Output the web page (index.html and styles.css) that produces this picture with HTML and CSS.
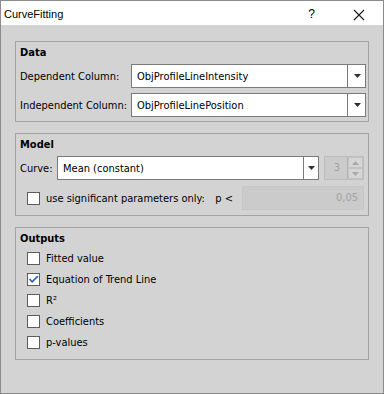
FILE: index.html
```html
<!DOCTYPE html>
<html lang="en">
<head>
    <meta charset="UTF-8">
    <title>CurveFitting</title>
    <link rel="stylesheet" href="styles.css">
</head>
<body>
    <div class="window">
        <div class="titlebar">
            <span class="title">CurveFitting</span>
            <span class="help">?</span>
            <svg class="close" width="12" height="12" viewBox="0 0 12 12">
                <path d="M1 1 L11 11 M11 1 L1 11" stroke="#1a1a1a" stroke-width="1.1" fill="none"/>
            </svg>
        </div>
        <div class="dialog">
            <div class="group data">
                <div class="group-title">Data</div>
                <div class="form-row">
                    <span class="label">Dependent Column:</span>
                    <div class="combo">
                        <span class="combo-text">ObjProfileLineIntensity</span>
                        <span class="combo-arrow"><svg width="7" height="4" viewBox="0 0 7 4"><path d="M0 0 H7 L3.5 4 Z" fill="#2e2e2e"/></svg></span>
                    </div>
                </div>
                <div class="form-row">
                    <span class="label">Independent Column:</span>
                    <div class="combo">
                        <span class="combo-text">ObjProfileLinePosition</span>
                        <span class="combo-arrow"><svg width="7" height="4" viewBox="0 0 7 4"><path d="M0 0 H7 L3.5 4 Z" fill="#2e2e2e"/></svg></span>
                    </div>
                </div>
            </div>

            <div class="group model">
                <div class="group-title">Model</div>
                <div class="curve-row">
                    <span class="label curve-label">Curve:</span>
                    <div class="combo curve-combo">
                        <span class="combo-text">Mean (constant)</span>
                        <span class="combo-arrow"><svg width="7" height="4" viewBox="0 0 7 4"><path d="M0 0 H7 L3.5 4 Z" fill="#2e2e2e"/></svg></span>
                    </div>
                    <div class="spinbox">
                        <span class="spin-value">3</span>
                        <div class="spin-buttons">
                            <span class="spin-btn"><svg width="7" height="4" viewBox="0 0 7 4"><path d="M0 4 H7 L3.5 0 Z" fill="#a9a9a9"/></svg></span>
                            <span class="spin-btn"><svg width="7" height="4" viewBox="0 0 7 4"><path d="M0 0 H7 L3.5 4 Z" fill="#a9a9a9"/></svg></span>
                        </div>
                    </div>
                </div>
                <div class="sig-row">
                    <span class="checkbox"></span>
                    <span class="check-text">use significant parameters only:</span>
                    <span class="p-label">p &lt;</span>
                    <div class="line-edit">0,05</div>
                </div>
            </div>

            <div class="group outputs">
                <div class="group-title">Outputs</div>
                <div class="check-row"><span class="checkbox"></span><span class="check-text">Fitted value</span></div>
                <div class="check-row">
                    <span class="checkbox">
                        <svg width="11" height="11" viewBox="0 0 11 11"><path d="M1.5 5 L4.2 7.8 L9.8 2.2" stroke="#2a62b8" stroke-width="1.7" fill="none"/></svg>
                    </span>
                    <span class="check-text">Equation of Trend Line</span>
                </div>
                <div class="check-row"><span class="checkbox"></span><span class="check-text">R²</span></div>
                <div class="check-row"><span class="checkbox"></span><span class="check-text">Coefficients</span></div>
                <div class="check-row"><span class="checkbox"></span><span class="check-text">p-values</span></div>
            </div>
        </div>
    </div>
</body>
</html>
```

FILE: styles.css
```css
*{
    margin: 0;
    padding: 0;
    box-sizing: border-box;
}
body{
    background: #fff;
    font-family: "DejaVu Sans Condensed", "DejaVu Sans", sans-serif;
    font-stretch: semi-condensed;
    font-size: 11px;
    color: #000;
}
.window{
    width: 384px;
    height: 394px;
    border: 1px solid #8c8c8c;
    display: flex;
    flex-direction: column;
}
.titlebar{
    height: 24px;
    background: #fff;
    display: flex;
    align-items: center;
    padding-left: 3px;
}
.title{
    font-family: "Liberation Sans", sans-serif;
    font-stretch: normal;
    font-size: 11px;
    flex: 1;
    padding-top: 2px;
}
.help{
    font-family: "Liberation Sans", sans-serif;
    font-stretch: normal;
    font-size: 12px;
    margin-right: 38px;
    padding-top: 2px;
}
.close{
    margin-right: 18px;
    margin-top: 3px;
}
.dialog{
    flex: 1;
    background: #d3d3d3;
    padding: 16px 14px 0 14px;
}
.group{
    border: 1px solid #a3a3a3;
    padding: 4px 2px 4px 4px;
    margin-bottom: 11px;
}
.group-title{
    font-weight: bold;
    height: 13px;
    line-height: 13px;
}
.form-row{
    display: flex;
    align-items: center;
    margin-top: 5px;
}
.label{
    width: 111px;
    flex-shrink: 0;
}
.combo{
    flex: 1;
    height: 24px;
    background: #fff;
    border: 1px solid #7a7a7a;
    display: flex;
    align-items: center;
}
.combo-text{
    flex: 1;
    padding-left: 5px;
}
.combo-arrow{
    width: 18px;
    height: 100%;
    border-left: 1px solid #7a7a7a;
    display: flex;
    align-items: center;
    justify-content: center;
    padding-left: 1px;
}
.combo-arrow svg{
    display: block;
}
.model{
    padding-right: 4px;
    padding-bottom: 5px;
}
.curve-row{
    display: flex;
    align-items: center;
    margin-top: 5px;
}
.curve-label{
    width: 37px;
}
.curve-combo{
    flex: none;
    width: 262px;
}
.curve-combo .combo-arrow{
    width: 15px;
}
.spinbox{
    margin-left: 5px;
    width: 40px;
    height: 24px;
    border: 1px solid #bdbdbd;
    background: #cbcbcb;
    display: flex;
}
.spin-value{
    flex: 1;
    color: #a2a2a2;
    text-align: right;
    padding-right: 7px;
    line-height: 22px;
}
.spin-buttons{
    width: 16px;
    display: flex;
    flex-direction: column;
    border-left: 1px solid #b4b4b4;
}
.spin-btn{
    flex: 1;
    display: flex;
    align-items: center;
    justify-content: center;
    background: #d6d6d6;
    border: 1px solid #c2c2c2;
}
.spin-btn svg{
    display: block;
}
.sig-row{
    display: flex;
    align-items: center;
    margin-top: 6px;
    height: 24px;
}
.checkbox{
    width: 13px;
    height: 13px;
    background: #fff;
    border: 1px solid #5c5c5c;
    margin-left: 7px;
    flex-shrink: 0;
    display: flex;
    align-items: center;
    justify-content: center;
}
.checkbox svg{
    display: block;
}
.check-text{
    margin-left: 6px;
}
.p-label{
    margin-left: auto;
    margin-right: 9px;
}
.line-edit{
    width: 122px;
    height: 24px;
    background: #cbcbcb;
    border: 1px solid #c6c6c6;
    color: #a2a2a2;
    text-align: right;
    padding-right: 5px;
    line-height: 22px;
}
.outputs{
    padding-bottom: 6px;
}
.outputs .group-title{
    margin-bottom: 3px;
}
.check-row{
    display: flex;
    align-items: center;
    height: 21px;
}
```
